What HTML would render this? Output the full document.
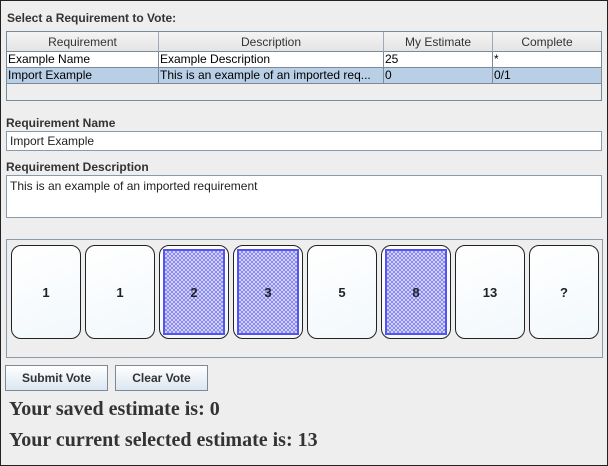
<!DOCTYPE html>
<html><head><meta charset="utf-8"><style>
*{margin:0;padding:0;box-sizing:border-box}
body{width:608px;height:466px;background:#eeeeee;font-family:"Liberation Sans",Arial,sans-serif;font-size:12px;color:#000;position:relative;overflow:hidden}
.frame{position:absolute;left:0;top:0;width:608px;height:466px;border:1px solid #222;}
.abs{position:absolute}
.lbl{font-weight:bold;color:#333;font-size:12px}
.table{left:6px;top:31px;width:596px;height:70px;border:1px solid #7a8a99;background:#eeeeee}
.hdr{position:absolute;top:0;height:20px;background:linear-gradient(#f4f4f4,#e4e4e4);border-right:1px solid #a0aab4;border-bottom:1px solid #7a8a99;text-align:center;line-height:20px;color:#333}
.cell{position:absolute;height:16px;line-height:15px;padding-left:1px;border-right:1px solid #7a8a99;white-space:nowrap;overflow:hidden}
.r1{top:20px;background:#fff;border-bottom:1px solid #7a8a99}
.r2{top:36px;background:#b8cfe5;border-bottom:1px solid #7a8a99}
.field{left:6px;width:596px;border:1px solid #8a9cac;background:#fff;padding-left:3px;color:#222}
.panel{left:6px;top:239px;width:597px;height:119px;border:1px solid #8a9cac}
.card{position:absolute;top:245px;width:70px;height:94px;border:1.5px solid #222;border-radius:10px;background:linear-gradient(160deg,#ffffff,#f2f8fc);text-align:center;font-weight:bold;font-size:13px;line-height:94px;color:#222}
.card.sel span{position:absolute;left:3px;top:3px;right:3px;bottom:3px;border:2px solid #5555ee;background-color:#a8a8f4;background-image:repeating-conic-gradient(#8c8cef 0 25%,#cfcffa 0 50%);background-size:4px 4px;line-height:84px}
.btn{top:365px;height:26px;border:1px solid #7a8a99;background:linear-gradient(#ffffff,#dbe6f1);font-weight:bold;color:#333;text-align:center;line-height:25px}
.big{left:9px;font-family:"Liberation Serif",serif;font-weight:bold;font-size:20px;color:#333}
</style></head><body>
<div class="abs lbl" style="left:7px;top:11px">Select a Requirement to Vote:</div>
<div class="abs table">
<div class="hdr" style="left:0;width:152px">Requirement</div>
<div class="hdr" style="left:152px;width:225px">Description</div>
<div class="hdr" style="left:377px;width:109px">My Estimate</div>
<div class="hdr" style="left:486px;width:108px;border-right:none">Complete</div>
<div class="cell r1" style="left:0;width:152px">Example Name</div>
<div class="cell r1" style="left:152px;width:225px">Example Description</div>
<div class="cell r1" style="left:377px;width:109px">25</div>
<div class="cell r1" style="left:486px;width:108px;border-right:none">*</div>
<div class="cell r2" style="left:0;width:152px">Import Example</div>
<div class="cell r2" style="left:152px;width:225px">This is an example of an imported req...</div>
<div class="cell r2" style="left:377px;width:109px">0</div>
<div class="cell r2" style="left:486px;width:108px;border-right:none">0/1</div>
</div>
<div class="abs lbl" style="left:6px;top:116px">Requirement Name</div>
<div class="abs field" style="top:131px;height:20px;line-height:19px">Import Example</div>
<div class="abs lbl" style="left:6px;top:160px">Requirement Description</div>
<div class="abs field" style="top:175px;height:43px;padding-top:3px">This is an example of an imported requirement</div>
<div class="abs panel"></div>
<div class="card" style="left:11px">1</div>
<div class="card" style="left:85px">1</div>
<div class="card sel" style="left:159px"><span>2</span></div>
<div class="card sel" style="left:233px"><span>3</span></div>
<div class="card" style="left:307px">5</div>
<div class="card sel" style="left:381px"><span>8</span></div>
<div class="card" style="left:455px">13</div>
<div class="card" style="left:529px">?</div>
<div class="abs btn" style="left:5px;width:103px">Submit Vote</div>
<div class="abs btn" style="left:115px;width:93px">Clear Vote</div>
<div class="abs big" style="top:398px">Your saved estimate is: 0</div>
<div class="abs big" style="top:429px">Your current selected estimate is: 13</div>
<div class="frame"></div>
</body></html>
